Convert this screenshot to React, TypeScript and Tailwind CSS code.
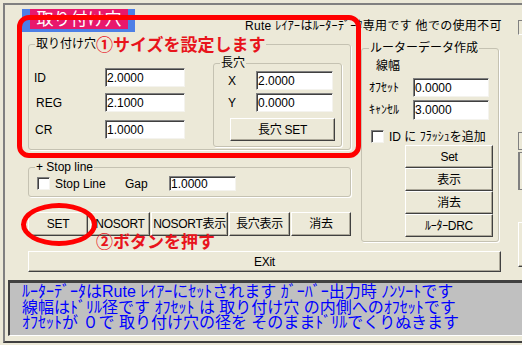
import React from "react";

// classic Win32 3D edges
const sunken =
  "bg-white border border-t-[#808080] border-l-[#808080] border-r-[#f4f3ee] border-b-[#f4f3ee] shadow-[inset_1px_1px_0_#404040]";
const raised =
  "bg-[#ece9d8] border border-t-white border-l-white border-r-[#404040] border-b-[#404040] shadow-[inset_-1px_-1px_0_#aca899]";

function Field({ value, className }: { value: string; className: string }) {
  return (
    <div className={`${sunken} ${className} flex items-center pl-[1px] text-[12px] leading-none text-black`}>
      {value}
    </div>
  );
}

function Btn({ label, className }: { label: string; className: string }) {
  return (
    <div
      className={`${raised} ${className} flex items-center justify-center text-[12px] leading-none text-black whitespace-nowrap tracking-[-0.3px]`}
    >
      {label}
    </div>
  );
}

function Check() {
  return <div className={`${sunken} w-[13px] h-[13px] shrink-0`} />;
}

function Group({
  title,
  className,
  legend = "ml-[6px]",
  children,
}: {
  title: string;
  className: string;
  legend?: string;
  children?: React.ReactNode;
}) {
  return (
    <fieldset className={`border border-[#c5c2b2] rounded-[3px] shadow-[1px_1px_0_#fff] ${className}`}>
      <legend className={`${legend} px-[1px] text-[12px] leading-[14px] text-black`}>{title}</legend>
      {children}
    </fieldset>
  );
}

export default function App() {
  return (
    <div className="w-[522px] h-[345px] bg-[#ece9d8] relative overflow-hidden pt-[3px] pl-[3px] font-['Liberation_Sans','Noto_Sans_CJK_JP',sans-serif] text-black">
      <div className="w-[530px] h-[340px] border-t-2 border-l-2 border-b-2 border-t-[#808080] border-l-[#808080] border-b-[#404040]">
        {/* header */}
        <div className="flex items-start h-[32px]">
          <div className="ml-[17px] mt-[4px] w-[113px] h-[23px] bg-[#4d7fe6]">
            <div className="ml-[8px] w-[98px] h-[20px] bg-[#e8186c] flex items-center justify-center text-white text-[17px] leading-none">
              取り付け穴
            </div>
          </div>
          <div className="ml-[110px] mt-[14px] w-[273px] text-[12px] leading-[14px] whitespace-nowrap tracking-[0.3px]">
            Rute ﾚｲｱｰはﾙｰﾀｰﾃﾞｰﾀ専用です 他での使用不可
          </div>
          <div className="mt-[15px] w-[10px] h-[15px] border border-t-[#808080] border-l-[#808080] border-r-0 border-b-white" />
        </div>

        {/* main row */}
        <div className="flex items-start h-[205px]">
          <div className="ml-[23px] w-[323px]">
            <Group title="取り付け穴" className="w-[323px] h-[113px]">
              <div className="flex">
                <div className="flex flex-col w-[156px]">
                  <div className="mt-[17px] flex items-center h-[19px]">
                    <span className="w-[76px] pl-[5px] text-[12px]">ID</span>
                    <Field value="2.0000" className="w-[80px] h-[19px]" />
                  </div>
                  <div className="mt-[6px] flex items-center h-[19px]">
                    <span className="w-[76px] pl-[7px] text-[12px]">REG</span>
                    <Field value="2.1000" className="w-[80px] h-[19px]" />
                  </div>
                  <div className="mt-[8px] flex items-center h-[19px]">
                    <span className="w-[76px] pl-[6px] text-[12px]">CR</span>
                    <Field value="1.0000" className="w-[80px] h-[19px]" />
                  </div>
                </div>
                <Group title="長穴" className="ml-[28px] mt-[5px] w-[129px] h-[91px]">
                  <div className="mt-[1px] flex items-center h-[19px]">
                    <span className="w-[42px] pl-[14px] text-[12px]">X</span>
                    <Field value="2.0000" className="w-[77px] h-[19px]" />
                  </div>
                  <div className="mt-[3px] flex items-center h-[19px]">
                    <span className="w-[42px] pl-[14px] text-[12px]">Y</span>
                    <Field value="0.0000" className="w-[77px] h-[19px]" />
                  </div>
                  <Btn label="長穴 SET" className="mt-[6px] ml-[16px] w-[105px] h-[23px]" />
                </Group>
              </div>
            </Group>

            <Group title="+ Stop line" className="mt-[10px] w-[323px] h-[37px]">
              <div className="mt-[2px] flex items-center h-[15px] text-[12px]">
                <div className="ml-[8px]">
                  <Check />
                </div>
                <span className="ml-[5px] w-[70px]">Stop Line</span>
                <span className="w-[44px]">Gap</span>
                <Field value="1.0000" className="w-[67px] h-[15px]" />
              </div>
            </Group>

            <div className="mt-[15px] flex h-[24px]">
              <Btn label="SET" className="w-[60px] h-[24px]" />
              <Btn label="NOSORT" className="ml-[2px] w-[60px] h-[24px]" />
              <Btn label="NOSORT表示" className="ml-[1px] w-[77px] h-[24px]" />
              <Btn label="長穴表示" className="ml-[1px] w-[61px] h-[24px]" />
              <Btn label="消去" className="ml-[1px] w-[60px] h-[24px]" />
            </div>
          </div>

          <Group title="ルーターデータ作成" legend="ml-[7px]" className="ml-[10px] mt-[4px] w-[138px] h-[201px]">
            <div className="mt-[4px] pl-[14px] text-[12px] leading-[14px]">線幅</div>
            <div className="mt-[5px] flex items-center h-[19px]">
              <span className="w-[51px] pl-[7px] text-[12px] whitespace-nowrap">ｵﾌｾｯﾄ</span>
              <Field value="0.0000" className="w-[76px] h-[19px]" />
            </div>
            <div className="mt-[3px] flex items-center h-[20px]">
              <span className="w-[51px] pl-[7px] text-[12px] whitespace-nowrap">ｷｬﾝｾﾙ</span>
              <Field value="3.0000" className="w-[76px] h-[20px]" />
            </div>
            <div className="mt-[10px] flex items-center h-[13px] text-[12px]">
              <div className="ml-[9px]">
                <Check />
              </div>
              <span className="ml-[5px] whitespace-nowrap">ID に ﾌﾗｯｼｭを追加</span>
            </div>
            <div className="mt-[2px] ml-[43px] w-[88px] flex flex-col">
              <Btn label="Set" className="w-[88px] h-[23px]" />
              <Btn label="表示" className="w-[88px] h-[23px]" />
              <Btn label="消去" className="w-[88px] h-[23px]" />
              <Btn label="ﾙｰﾀｰDRC" className="w-[88px] h-[23px]" />
            </div>
          </Group>

          <div className="ml-[19px] w-[10px] flex flex-col">
            <div className="mt-[95px] h-[18px] border border-r-0 border-[#808080]" />
            <div className="mt-[2px] h-[38px] border-l-2 border-t border-b border-[#808080]" />
            <div className={`mt-[32px] h-[45px] ${raised}`} />
          </div>
        </div>

        <Btn label="EXit" className="mt-[9px] ml-[23px] w-[473px] h-[21px]" />

        {/* status */}
        <div className="mt-[8px] ml-[3px] w-[530px] h-[56px] bg-[#c0c0c0] border-t-[3px] border-l-2 border-b border-t-[#404040] border-l-[#404040] border-b-white pl-[12px] pt-[1px] text-[16px] leading-[15.5px] text-[#0000ff] whitespace-nowrap">
          <div>ﾙｰﾀｰﾃﾞｰﾀはRute ﾚｲｱｰにｾｯﾄされます ｶﾞｰﾊﾞｰ出力時 ﾉﾝｿｰﾄです</div>
          <div>線幅はﾄﾞﾘﾙ径です ｵﾌｾｯﾄ は 取り付け穴 の内側へのｵﾌｾｯﾄです</div>
          <div>ｵﾌｾｯﾄが ０で 取り付け穴の径を そのままﾄﾞﾘﾙでくりぬきます</div>
        </div>
      </div>

      {/* red annotations */}
      <div className="absolute left-[17px] top-[15px] w-[344px] h-[143px] border-[5px] border-[#ff0000] rounded-[12px]" />
      <div className="absolute left-[96px] top-[36px] bg-[#ece9d8] text-[#e8141c] text-[17px] leading-[19px] font-bold whitespace-nowrap">
        ①サイズを設定します
      </div>
      <div className="absolute left-[21px] top-[203px] w-[76px] h-[43px] border-[5px] border-[#ff0000] rounded-[50%]" />
      <div className="absolute left-[96px] top-[233px] text-[#e8141c] text-[17px] leading-[19px] font-bold whitespace-nowrap">
        ②ボタンを押す
      </div>
    </div>
  );
}
